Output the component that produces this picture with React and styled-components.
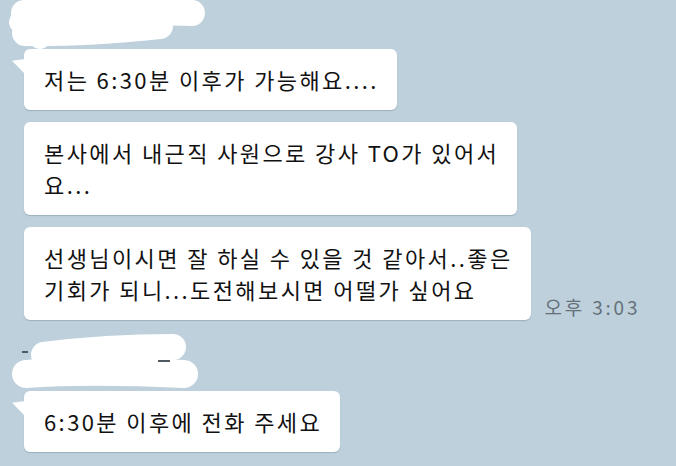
import React from 'react';
import styled, { createGlobalStyle, css } from 'styled-components';

const GlobalStyle = createGlobalStyle`
  html, body {
    margin: 0;
    padding: 0;
    background: #bdd0dc;
  }
  body {
    font-family: "Noto Sans CJK KR", "Noto Sans", sans-serif;
    -webkit-font-smoothing: antialiased;
  }
`;

const Page = styled.div`
  width: 676px;
  height: 466px;
  overflow: hidden;
  background: #bdd0dc;
`;

const Group = styled.section`
  display: flex;
  flex-direction: column;
  margin-top: ${props => props.$top || 0}px;
`;

const Scribble = styled.svg`
  display: block;
  width: 220px;
  height: ${props => props.$h}px;
`;

const Messages = styled.div`
  display: flex;
  flex-direction: column;
  align-items: flex-start;
  gap: 12px;
  padding-left: 24px;
`;

const Row = styled.div`
  display: flex;
  align-items: flex-end;
  gap: 14px;
`;

const Bubble = styled.div`
  position: relative;
  background: #ffffff;
  border-radius: 6px;
  padding: 14px 18px 15px 20px;
  font-size: 22px;
  letter-spacing: 2.4px;
  line-height: 32px;
  color: #111111;
  white-space: nowrap;
  box-shadow: 0 1px 1px rgba(60, 80, 100, 0.25);

  ${props => props.$tail && css`
    &::before {
      content: "";
      position: absolute;
      left: -12px;
      top: 10px;
      width: 13px;
      height: 15px;
      background: #ffffff;
      clip-path: polygon(0 12%, 100% 0, 100% 100%);
    }
  `}
`;

const Time = styled.span`
  font-size: 19px;
  letter-spacing: 2.8px;
  line-height: 20px;
  color: #65707a;
  white-space: nowrap;
  padding-bottom: 3px;
`;

function TopScribble() {
  return (
    <Scribble $h={49} viewBox="0 0 220 49">
      <path d="M80 7h3M90 6h2M160 29h12" stroke="#6f7a84" strokeWidth="1.5" />
      <path d="M24 13 C80 10 150 12 192 13" stroke="#fff" strokeWidth="26" strokeLinecap="round" fill="none" />
      <path d="M25 33 C70 34 120 30 160 26" stroke="#fff" strokeWidth="26" strokeLinecap="round" fill="none" />
      <path d="M20 22 L40 38" stroke="#fff" strokeWidth="22" strokeLinecap="round" />
    </Scribble>
  );
}

function BottomScribble() {
  return (
    <Scribble $h={60} viewBox="0 0 220 60">
      <path d="M22 21h6" stroke="#4f5962" strokeWidth="2" />
      <path d="M44 24 C90 18 140 16 173 16" stroke="#fff" strokeWidth="26" strokeLinecap="round" fill="none" />
      <path d="M26 43 C80 39 140 41 184 43" stroke="#fff" strokeWidth="28" strokeLinecap="round" fill="none" />
      <path d="M158 30h12" stroke="#4f5962" strokeWidth="2" />
    </Scribble>
  );
}

export default function App() {
  return (
    <Page>
      <GlobalStyle />
      <Group>
        <TopScribble />
        <Messages>
          <Bubble $tail>저는 6:30분 이후가 가능해요....</Bubble>
          <Bubble>
            본사에서 내근직 사원으로 강사 TO가 있어서<br />요...
          </Bubble>
          <Row>
            <Bubble>
              선생님이시면 잘 하실 수 있을 것 같아서..좋은<br />기회가 되니...도전해보시면 어떨가 싶어요
            </Bubble>
            <Time>오후 3:03</Time>
          </Row>
        </Messages>
      </Group>
      <Group $top={11}>
        <BottomScribble />
        <Messages>
          <Bubble $tail>6:30분 이후에 전화 주세요</Bubble>
        </Messages>
      </Group>
    </Page>
  );
}
